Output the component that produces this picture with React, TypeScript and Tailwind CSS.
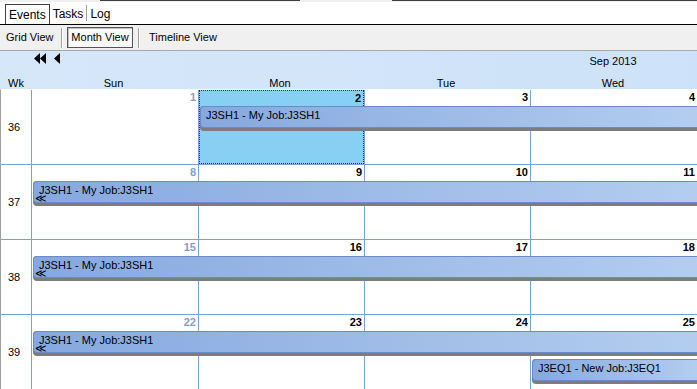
import { ReactNode } from "react";

type Bar = { col: number; slot: number; label: string; cont?: boolean };

const weeks: { wk: number; days: number[]; bars: Bar[] }[] = [
  { wk: 36, days: [1, 2, 3, 4], bars: [{ col: 3, slot: 0, label: "J3SH1 - My Job:J3SH1" }] },
  { wk: 37, days: [8, 9, 10, 11], bars: [{ col: 2, slot: 0, label: "J3SH1 - My Job:J3SH1", cont: true }] },
  { wk: 38, days: [15, 16, 17, 18], bars: [{ col: 2, slot: 0, label: "J3SH1 - My Job:J3SH1", cont: true }] },
  {
    wk: 39,
    days: [22, 23, 24, 25],
    bars: [
      { col: 2, slot: 0, label: "J3SH1 - My Job:J3SH1", cont: true },
      { col: 5, slot: 1, label: "J3EQ1 - New Job:J3EQ1" },
    ],
  },
];

const colStart = ["col-start-1", "col-start-1", "col-start-2", "col-start-3", "col-start-4", "col-start-5"];
const slotRow = ["row-start-2", "row-start-4"];

const Sep = () => (
  <div className="flex h-[20px]">
    <div className="w-px bg-[#a0a0a0]" />
    <div className="w-px bg-white" />
  </div>
);

function EventBar({ bar }: { bar: Bar }) {
  return (
    <div
      className={`${colStart[bar.col]} col-end-6 ${slotRow[bar.slot]} relative z-10 ml-[2px] h-[25px] rounded-l-[4px] bg-[#7d7d7d] pb-[3px]`}
    >
      <div className="relative h-[22px] whitespace-nowrap rounded-l-[4px] border border-r-0 border-[#6a8bc6] bg-gradient-to-r from-[#86a8df] via-[#9dbbe7] to-[#b4cdef] pl-[5px] leading-[16px]">
        {bar.label}
        {bar.cont && (
          <span className="absolute bottom-[-2px] left-[1px] text-[11px] leading-none">≪</span>
        )}
      </div>
    </div>
  );
}

function Cell({ col, day, sunday, selected }: { col: number; day: number; sunday: boolean; selected: boolean }) {
  return (
    <div
      className={`${colStart[col]} row-span-5 row-start-1 border-l border-[#7aa0d4] ${
        selected ? "bg-[#88d0f3]" : "bg-white"
      }`}
    >
      <div
        className={`h-full ${selected ? "border border-dotted border-[#303030]" : ""} pr-[2px] text-right font-bold leading-[14px] ${
          sunday ? "text-[#7f9ecb]" : "text-black"
        }`}
      >
        {day}
      </div>
    </div>
  );
}

function Week({ wk, days, bars }: { wk: number; days: number[]; bars: Bar[] }): ReactNode {
  return (
    <div className="grid h-[75px] grid-cols-[30px_167px_166px_166px_1fr] grid-rows-[16px_25px_3px_25px_1fr] border-b border-[#7aa0d4]">
      <div className="col-start-1 row-span-5 row-start-1 flex items-center pl-[7px]">{wk}</div>
      {days.map((d, i) => (
        <Cell key={d} col={i + 2} day={d} sunday={i === 0} selected={d === 2} />
      ))}
      {bars.map((b) => (
        <EventBar key={b.label + b.col} bar={b} />
      ))}
    </div>
  );
}

export default function App() {
  return (
    <div className="h-[389px] w-[697px] overflow-hidden bg-white font-['Liberation_Sans',Arial,sans-serif] text-[11px] text-black">
      <div className="flex h-[2px] bg-[#f0f0f0]">
        <div className="w-[100px]" />
        <div className="h-px w-[200px] bg-[#404040]" />
        <div className="w-[92px]" />
        <div className="h-px flex-1 bg-[#404040]" />
      </div>
      <div className="flex h-[23px] items-end border-b border-black pl-[5px]">
        <div className="flex h-[20px] items-center border border-b-0 border-[#404040] bg-white px-[3px] text-[12px]">
          Events
        </div>
        <div className="flex h-[20px] items-center px-[3px] text-[12px]">Tasks</div>
        <div className="h-[16px] w-px self-center bg-[#a0a0a0]" />
        <div className="flex h-[20px] items-center px-[3px] text-[12px]">Log</div>
      </div>
      <div className="flex h-[25px] items-center bg-[#f0f0f0] pl-[6px]">
        <span className="w-[55px]">Grid View</span>
        <Sep />
        <div className="ml-[4px] flex h-[21px] w-[66px] items-center justify-center border border-[#555] bg-[#fafafa] shadow-[inset_1px_1px_0_#c0c0c0]">
          Month View
        </div>
        <div className="ml-[5px]">
          <Sep />
        </div>
        <span className="ml-[9px]">Timeline View</span>
      </div>
      <div className="grid h-[39px] grid-cols-[30px_167px_166px_166px_1fr] grid-rows-[24px_15px] border-t border-[#a8a8a8] bg-gradient-to-r from-[#d6e7fa] to-[#cde2f8]">
        <div className="col-start-2 row-start-1 pl-[4px] pt-[2px]">
          <svg width="28" height="11" viewBox="0 0 28 11">
            <path d="M6 0 L0 5.5 L6 11 Z M12 0 L6 5.5 L12 11 Z M26 0 L20 5.5 L26 11 Z" fill="#000" />
          </svg>
        </div>
        <div className="col-start-5 row-start-1 pt-[2px] text-center">Sep 2013</div>
        <div className="col-start-1 row-start-2 pl-[8px]">Wk</div>
        <div className="col-start-2 row-start-2 text-center">Sun</div>
        <div className="col-start-3 row-start-2 text-center">Mon</div>
        <div className="col-start-4 row-start-2 text-center">Tue</div>
        <div className="col-start-5 row-start-2 text-center">Wed</div>
      </div>
      <div className="border-l border-t border-[#a0a0a0] border-t-white">
        {weeks.map((w) => (
          <Week key={w.wk} {...w} />
        ))}
      </div>
    </div>
  );
}
